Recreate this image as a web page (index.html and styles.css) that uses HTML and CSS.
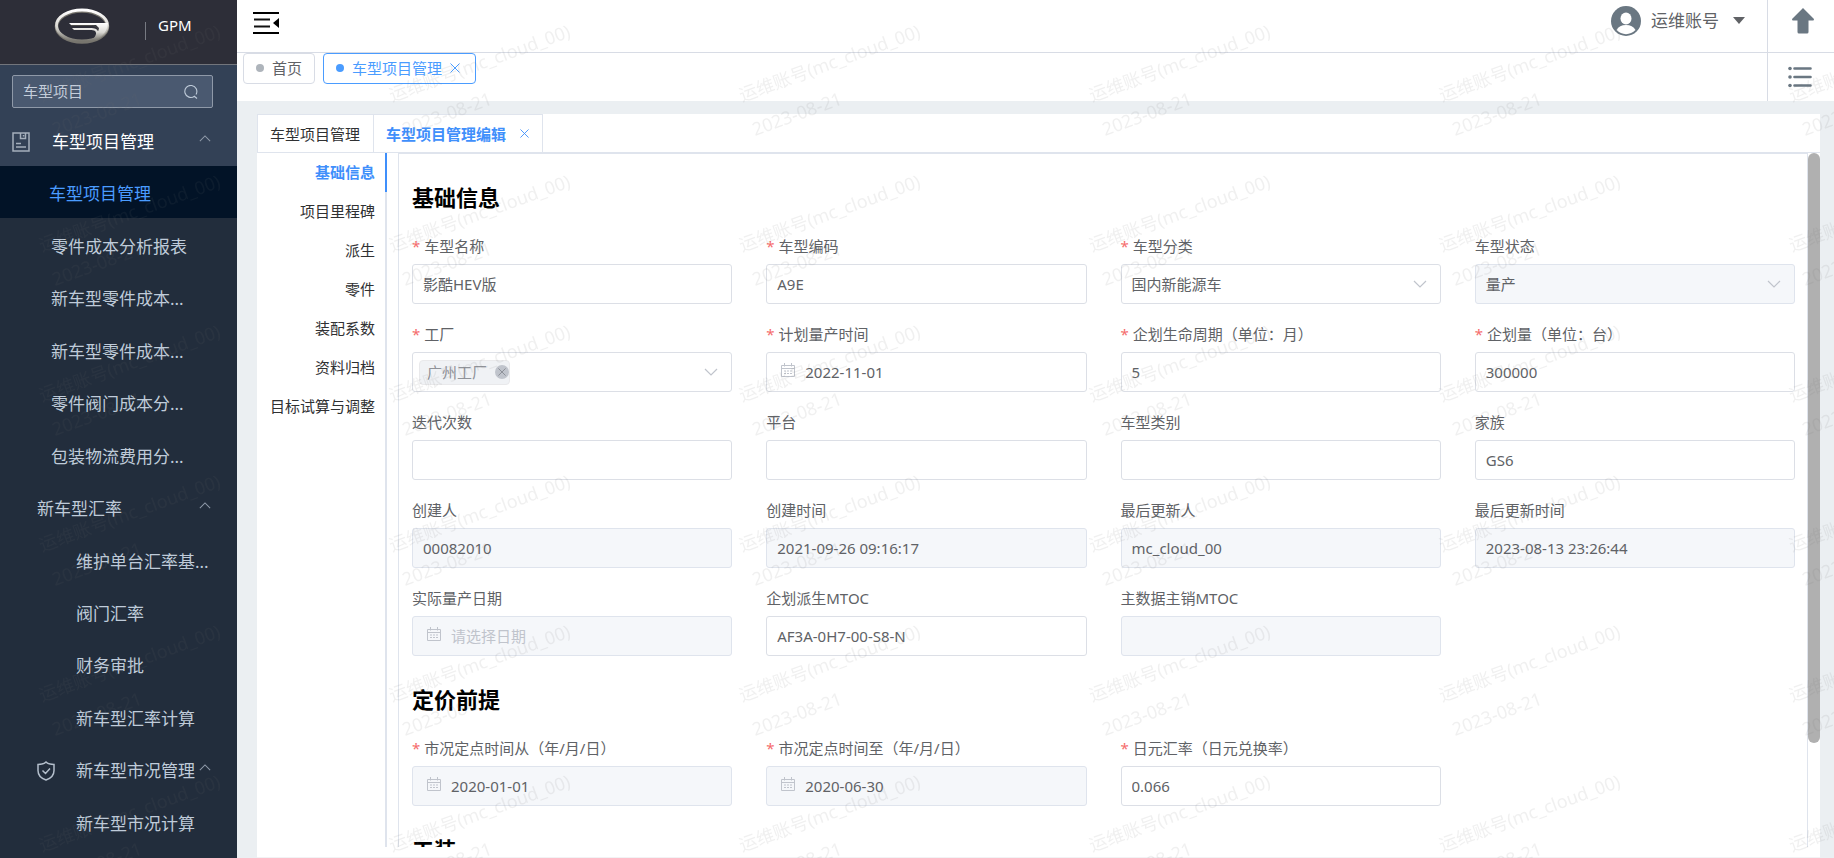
FILE: index.html
```html
<!DOCTYPE html>
<html lang="zh-CN">
<head>
<meta charset="utf-8">
<title>GPM - 车型项目管理</title>
<link rel="stylesheet" href="styles.css">
</head>
<body>
<svg class="defs" aria-hidden="true">
  <defs>
    <symbol id="chevron" viewBox="0 0 14 8"><path d="M1 1l6 6 6-6" fill="none" stroke="currentColor" stroke-width="1.200"/></symbol>
    <symbol id="close" viewBox="0 0 10 10"><path d="M0.500 0.500l9 9M9.500 0.500l-9 9" fill="none" stroke="currentColor"/></symbol>
    <symbol id="calendar" viewBox="0 0 14 14">
      <path d="M.5 2.500h13v11H.5zM.5 5.500h13M3.500 0v3.500M10.500 0v3.500" fill="none" stroke="currentColor"/>
      <path d="M3 8h2M6 8h2M9 8h2M3 10.500h2M6 10.500h2M9 10.500h2" stroke="currentColor" stroke-width="1.200"/>
    </symbol>
  </defs>
</svg>
<div class="app">
  <aside class="sidebar">
    <div class="brand">
      <svg class="brand-logo" viewBox="0 0 56 36" aria-label="logo">
        <defs>
          <linearGradient id="chrome" x1="0" y1="0" x2="0" y2="1">
            <stop offset="0" stop-color="#ffffff"/><stop offset=".55" stop-color="#d8d7d2"/><stop offset="1" stop-color="#77756e"/>
          </linearGradient>
        </defs>
        <ellipse cx="28" cy="18.500" rx="25.500" ry="15.500" fill="none" stroke="#77756e" stroke-width="3.600"/>
        <ellipse cx="28" cy="17.500" rx="25.500" ry="15.500" fill="none" stroke="url(#chrome)" stroke-width="2.800"/>
        <path d="M15 15h39l-1 5c-2 6-7 10-15 12 4-4 5-7 3-9-1-1-3-1-5-1H20l-2-2h18c5 0 7 1 8 3l1-3-3-3H17z" fill="url(#chrome)"/>
        <path d="M17 17.500h20c5 0 7 2 7 5" fill="none" stroke="#4c4b48"/>
      </svg>
      <span class="brand-name">GPM</span>
    </div>
    <div class="menu-top">
      <div class="search">
        <input class="search-input" type="text" value="车型项目" aria-label="搜索菜单">
        <svg class="search-icon" viewBox="0 0 14 14"><path d="M10.500 11.200A6 6 0 1 1 12 9.500M10 11l3 2.500" fill="none" stroke="currentColor" stroke-width="1.100"/></svg>
      </div>
      <a class="menu-head" href="#">
        <svg class="menu-icon" viewBox="0 0 18 20"><path d="M1 1h16v18H1zM8.500 1v5.500h5V1M11.500 3v1.500M4 11.500h5M4 15h10" fill="none" stroke="currentColor" stroke-width="1.500"/></svg>
        <span>车型项目管理</span>
        <svg class="menu-arrow"><use href="#chevron"/></svg>
      </a>
    </div>
    <nav class="menu">
      <a class="menu-item active" href="#">车型项目管理</a>
      <a class="menu-item" href="#">零件成本分析报表</a>
      <a class="menu-item" href="#">新车型零件成本...</a>
      <a class="menu-item" href="#">新车型零件成本...</a>
      <a class="menu-item" href="#">零件阀门成本分...</a>
      <a class="menu-item" href="#">包装物流费用分...</a>
      <a class="menu-item group" href="#"><span>新车型汇率</span><svg class="menu-arrow"><use href="#chevron"/></svg></a>
      <a class="menu-item sub" href="#">维护单台汇率基...</a>
      <a class="menu-item sub" href="#">阀门汇率</a>
      <a class="menu-item sub" href="#">财务审批</a>
      <a class="menu-item sub" href="#">新车型汇率计算</a>
      <a class="menu-item group" href="#">
        <svg class="menu-icon shield" viewBox="0 0 18 20"><path d="M9 1c2 2 5 2.500 8 2.500v6C17 14 13.500 17.500 9 19 4.500 17.500 1 14 1 9.500v-6C4 3.500 7 3 9 1zM5.500 9.500L8.500 12.500l4.500-5" fill="none" stroke="currentColor" stroke-width="1.500"/></svg>
        <span>新车型市况管理</span><svg class="menu-arrow"><use href="#chevron"/></svg></a>
      <a class="menu-item sub" href="#">新车型市况计算</a>
    </nav>
  </aside>

  <div class="main">
    <header class="topbar">
      <button class="icon-btn collapse" type="button" aria-label="折叠菜单">
        <svg viewBox="0 0 26 24" width="26" height="24"><path d="M0 2h26M0 22h26" stroke="#000" stroke-width="2"/><path d="M1 8.500h16M1 15.500h16" stroke="#111" stroke-width="2"/><path d="M26 7v10l-6-5z"/></svg>
      </button>
      <button class="user" type="button">
        <svg class="avatar" viewBox="0 0 30 30"><circle cx="15" cy="15" r="15" fill="#6a7782"/><ellipse cx="15" cy="12.500" rx="5.500" ry="6" fill="#fff"/><path d="M5.500 24c2-3.500 5-5 9.500-5s7.500 1.500 9.500 5c-5 5.500-14 5.500-19 0z" fill="#fff"/></svg>
        <span>运维账号</span>
        <svg class="caret" viewBox="0 0 12 8"><path d="M0 0h12L6 7z" fill="currentColor"/></svg>
      </button>
      <button class="icon-btn tool" type="button" aria-label="返回顶部">
        <svg viewBox="0 0 22 26" width="22" height="26"><path d="M11 0l11 11q0 1.500-1 1.500h-4.500V24q0 1.500-1.500 1.500H7Q5.500 25.500 5.500 24V12.500H1Q0 12.500 0 11z" fill="#6a7782"/></svg>
      </button>
    </header>
    <div class="tagbar">
      <div class="tags">
        <a class="tag" href="#"><i class="dot"></i>首页</a>
        <a class="tag current" href="#"><i class="dot"></i>车型项目管理<svg class="tag-close"><use href="#close"/></svg></a>
      </div>
      <button class="icon-btn tool" type="button" aria-label="列表">
        <svg viewBox="0 0 24 22" width="24" height="22"><path d="M6.500 2.500h16M6.500 11h16M6.500 19.500h16" stroke="#6a7782" stroke-width="2.600" stroke-linecap="round"/><g fill="#6a7782"><circle cx="2" cy="2.500" r="1.800"/><circle cx="2" cy="11" r="1.800"/><circle cx="2" cy="19.500" r="1.800"/></g></svg>
      </button>
    </div>

    <main class="page">
      <div class="tabs">
        <a class="tab" href="#">车型项目管理</a>
        <a class="tab current" href="#">车型项目管理编辑<svg class="tab-close"><use href="#close"/></svg></a>
      </div>
      <div class="body">
        <nav class="anchors">
          <a class="anchor current" href="#basic">基础信息</a>
          <a class="anchor" href="#">项目里程碑</a>
          <a class="anchor" href="#">派生</a>
          <a class="anchor" href="#">零件</a>
          <a class="anchor" href="#">装配系数</a>
          <a class="anchor" href="#">资料归档</a>
          <a class="anchor" href="#">目标试算与调整</a>
        </nav>
        <form class="panel">
          <h2 class="section-title" id="basic">基础信息</h2>
          <div class="fields">
            <div class="field"><label class="label required" for="name">车型名称</label><input class="control" id="name" type="text" value="影酷HEV版"></div>
            <div class="field"><label class="label required" for="code">车型编码</label><input class="control" id="code" type="text" value="A9E"></div>
            <div class="field"><label class="label required" for="class">车型分类</label>
              <div class="wrap"><select class="control" id="class"><option>国内新能源车</option></select><svg class="select-arrow"><use href="#chevron"/></svg></div></div>
            <div class="field"><label class="label" for="state">车型状态</label>
              <div class="wrap"><select class="control" id="state" disabled><option>量产</option></select><svg class="select-arrow"><use href="#chevron"/></svg></div></div>

            <div class="field"><span class="label required" id="plant">工厂</span>
              <div class="wrap"><div class="control multi" role="listbox" aria-labelledby="plant"><span class="chip" role="option">广州工厂<button class="chip-close" type="button" aria-label="移除"><svg width="8" height="8"><use href="#close"/></svg></button></span></div><svg class="select-arrow"><use href="#chevron"/></svg></div></div>
            <div class="field"><label class="label required" for="sop">计划量产时间</label>
              <div class="wrap"><input class="control date" id="sop" type="text" value="2022-11-01"><svg class="date-icon"><use href="#calendar"/></svg></div></div>
            <div class="field"><label class="label required" for="life">企划生命周期（单位：月）</label><input class="control" id="life" type="text" value="5"></div>
            <div class="field"><label class="label required" for="volume">企划量（单位：台）</label><input class="control" id="volume" type="text" value="300000"></div>

            <div class="field"><label class="label" for="iter">迭代次数</label><input class="control" id="iter" type="text"></div>
            <div class="field"><label class="label" for="platform">平台</label><input class="control" id="platform" type="text"></div>
            <div class="field"><label class="label" for="kind">车型类别</label><input class="control" id="kind" type="text"></div>
            <div class="field"><label class="label" for="family">家族</label><input class="control" id="family" type="text" value="GS6"></div>

            <div class="field"><label class="label" for="creator">创建人</label><input class="control" id="creator" type="text" value="00082010" disabled></div>
            <div class="field"><label class="label" for="created">创建时间</label><input class="control" id="created" type="text" value="2021-09-26 09:16:17" disabled></div>
            <div class="field"><label class="label" for="updater">最后更新人</label><input class="control" id="updater" type="text" value="mc_cloud_00" disabled></div>
            <div class="field"><label class="label" for="updated">最后更新时间</label><input class="control" id="updated" type="text" value="2023-08-13 23:26:44" disabled></div>

            <div class="field"><label class="label" for="actual">实际量产日期</label>
              <div class="wrap"><input class="control date" id="actual" type="text" placeholder="请选择日期" disabled><svg class="date-icon"><use href="#calendar"/></svg></div></div>
            <div class="field"><label class="label" for="mtoc">企划派生MTOC</label><input class="control" id="mtoc" type="text" value="AF3A-0H7-00-S8-N"></div>
            <div class="field"><label class="label" for="master">主数据主销MTOC</label><input class="control" id="master" type="text" disabled></div>
          </div>
          <h2 class="section-title">定价前提</h2>
          <div class="fields">
            <div class="field"><label class="label required" for="from">市况定点时间从（年/月/日）</label>
              <div class="wrap"><input class="control date" id="from" type="text" value="2020-01-01" disabled><svg class="date-icon"><use href="#calendar"/></svg></div></div>
            <div class="field"><label class="label required" for="to">市况定点时间至（年/月/日）</label>
              <div class="wrap"><input class="control date" id="to" type="text" value="2020-06-30" disabled><svg class="date-icon"><use href="#calendar"/></svg></div></div>
            <div class="field"><label class="label required" for="rate">日元汇率（日元兑换率）</label><input class="control" id="rate" type="text" value="0.066"></div>
          </div>
          <h2 class="section-title">工装</h2>
        </form>
        <div class="scrollbar"><div class="thumb"></div></div>
      </div>
    </main>
  </div>
</div>
<svg class="watermark" aria-hidden="true">
  <defs>
    <pattern id="mark" width="350" height="150" patternUnits="userSpaceOnUse">
      <g class="mark-text">
        <text transform="translate(42 102) rotate(-20)">运维账号(mc_cloud_00)</text>
        <text transform="translate(55 136) rotate(-20)">2023-08-21</text>
      </g>
    </pattern>
  </defs>
  <rect width="100%" height="100%" fill="url(#mark)"/>
</svg>
</body>
</html>
```

FILE: styles.css
```css
* { box-sizing: border-box; }
html, body { height: 100%; margin: 0; }
body {
  font: 15px/20px "Noto Sans", "Noto Sans CJK SC", sans-serif;
  color: #606266;
  overflow: hidden;
}
a { color: inherit; text-decoration: none; }
button { border: 0; background: none; padding: 0; font: inherit; color: inherit; cursor: pointer; }
svg { display: block; flex: none; }
.defs { position: absolute; width: 0; height: 0; }
.app { display: flex; height: 100vh; }

/* Sidebar */
.sidebar {
  width: 237px;
  flex: none;
  display: flex;
  flex-direction: column;
  background: #222d3c;
  color: #bfcbd9;
}
.brand {
  display: flex;
  align-items: flex-start;
  height: 65px;
  flex: none;
  padding: 8px 0 0 54px;
  gap: 35px;
  background: #2d2e38;
  border-bottom: 1px solid #72757c;
}
.brand-logo { width: 56px; height: 36px; }
.brand-name {
  position: relative;
  padding-left: 13px;
  margin-top: 7px;
  color: #fff;
}
.brand-name::before {
  content: "";
  position: absolute;
  left: 0;
  top: 7px;
  height: 18px;
  border-left: 1px solid #777a82;
}
.menu-top { flex: none; padding: 10px 26px 0 12px; background: #334156; }
.search { position: relative; margin-right: -2px; }
.search-input {
  width: 100%;
  height: 33px;
  padding: 0 36px 2px 10px;
  border: 1px solid #8f99a8;
  border-radius: 2px;
  background: #4a5970;
  color: #c5cedb;
  font: inherit;
}
.search-icon { position: absolute; right: 15px; top: 10px; width: 14px; height: 14px; }
.menu-head {
  display: flex;
  align-items: center;
  gap: 22px;
  height: 58px;
  padding-top: 10px;
  font-size: 17px;
  color: #fff;
}
.menu-icon { width: 18px; height: 20px; color: #a5afbc; }
.menu-arrow { width: 12px; height: 7px; margin-left: auto; margin-bottom: 8px; color: #8f9aa9; transform: rotate(180deg); }
.menu {
  flex: 1;
  min-height: 0;
  display: flex;
  flex-direction: column;
  padding-bottom: 10px;
  overflow: hidden;
}
.menu-item {
  flex: 1 0 52px;
  display: flex;
  align-items: center;
  padding: 4px 26px 0 51px;
  font-size: 17px;
  white-space: nowrap;
}
.menu-item.active { padding-left: 49px; background: #021327; color: #4a9cff; }
.menu-item.group { padding-left: 37px; }
.menu-item.sub { padding-left: 76px; }
.shield { margin-right: 21px; color: #b4bfcc; }

/* Top bars */
.main { flex: 1; min-width: 0; display: flex; flex-direction: column; background: #ebeff2; }
.topbar {
  display: flex;
  height: 53px;
  flex: none;
  background: #fff;
  border-bottom: 1px solid #d8dce5;
}
.icon-btn { display: flex; }
.collapse { padding: 11px 16px; }
.user {
  display: flex;
  align-items: center;
  gap: 10px;
  margin-left: auto;
  padding: 6px 22px 16px 0;
  font-size: 17px;
}
.avatar { width: 30px; height: 30px; }
.caret { width: 12px; height: 8px; margin-left: 4px; }
.tool { width: 67px; justify-content: center; border-left: 1px solid #d8dce5; }
.topbar .tool { padding: 8px 0 0 3px; }
.tagbar { display: flex; height: 48px; flex: none; background: #fff; justify-content: space-between; }
.tagbar .tool { padding: 13px 2px 0 0; }
.tags { display: flex; align-items: flex-start; gap: 8px; padding-left: 6px; }
.tag {
  display: flex;
  align-items: center;
  height: 31px;
  padding: 0 12px 1px;
  border: 1px solid #d8dce5;
  border-radius: 4px;
}
.tag.current { border-color: #4a9cff; color: #4a9cff; padding-right: 15px; }
.dot { width: 8px; height: 8px; margin-right: 8px; border-radius: 50%; background: #aeb4bb; }
.current .dot { background: #4a9cff; }
.tag-close { width: 10px; height: 10px; margin-left: 8px; }

/* Page */
.page {
  flex: 1;
  min-height: 0;
  display: flex;
  flex-direction: column;
  margin: 13px 14px 0 20px;
  padding-bottom: 10px;
  background: #fff;
  border-bottom: 1px solid #f2f2f4;
}
.tabs { display: flex; flex: none; height: 39px; border-bottom: 1px solid #dfe4ed; color: #303133; }
.tab {
  display: flex;
  align-items: center;
  padding: 0 13px 0 12px;
  border: 1px solid #dfe4ed;
  border-width: 1px 0 0 1px;
}
.tab.current { border-right-width: 1px; font-weight: 700; color: #3f8ffb; }
.tab-close { width: 9px; height: 9px; margin-left: 14px; }
.body { flex: 1; min-height: 0; display: flex; }
.anchors { width: 130px; flex: none; border-right: 2px solid #dfe4ed; color: #303133; }
.anchor {
  display: block;
  line-height: 39px;
  margin-right: -2px;
  padding-right: 10px;
  border-right: 2px solid transparent;
  text-align: right;
}
.anchor.current { border-color: #3f8ffb; color: #3f8ffb; font-weight: 700; }
.panel {
  flex: 1;
  min-width: 0;
  margin-left: 11px;
  padding: 0 12px 0 13px;
  border: 1px solid #dfe4ed;
  border-bottom: 0;
  overflow: hidden;
}
.scrollbar { width: 12px; flex: none; }
.thumb { height: 85%; border-radius: 6px; background: #b0b0b0; }
.section-title { margin: 0; padding: 27px 0 17px; font-size: 22px; line-height: 32px; color: #000; }
.fields { display: grid; grid-template-columns: repeat(4, 1fr); gap: 14px 34px; }
.label { display: block; padding-bottom: 2px; line-height: 32px; white-space: nowrap; }
.required::before { content: "*"; margin-right: 4px; color: #f56c6c; }
.wrap { position: relative; }
.control {
  display: block;
  width: 100%;
  height: 40px;
  padding: 0 10px 1px;
  border: 1px solid #dcdfe6;
  border-radius: 3px;
  background: #fff;
  color: #606266;
  font: inherit;
  appearance: none;
  opacity: 1;
}
.control:disabled { background: #f5f7fa; border-color: #dfe4ed; }
.control::placeholder { color: #c0c4cc; }
.date { padding-left: 38px; }
.date-icon { position: absolute; left: 15px; top: 11px; width: 14px; height: 14px; color: #c0c4cc; }
.select-arrow { position: absolute; right: 14px; top: 16px; width: 14px; height: 8px; color: #c0c4cc; }
.multi { display: flex; align-items: center; padding: 0 6px; }
.chip {
  display: flex;
  align-items: center;
  height: 25px;
  padding: 0 0 0 7px;
  border: 1px solid #e9e9eb;
  border-radius: 4px;
  background: #f0f2f5;
  color: #909399;
}
.chip-close {
  display: grid;
  place-items: center;
  width: 14px;
  height: 14px;
  margin-left: 8px;
  border-radius: 50%;
  background: #c0c4cc;
  color: #80848c;
}

/* Watermark */
.watermark { position: fixed; inset: 0; width: 100%; height: 100%; pointer-events: none; z-index: 10; }
.mark-text { font-size: 18px; fill: rgba(110, 110, 110, 0.1); }
```
